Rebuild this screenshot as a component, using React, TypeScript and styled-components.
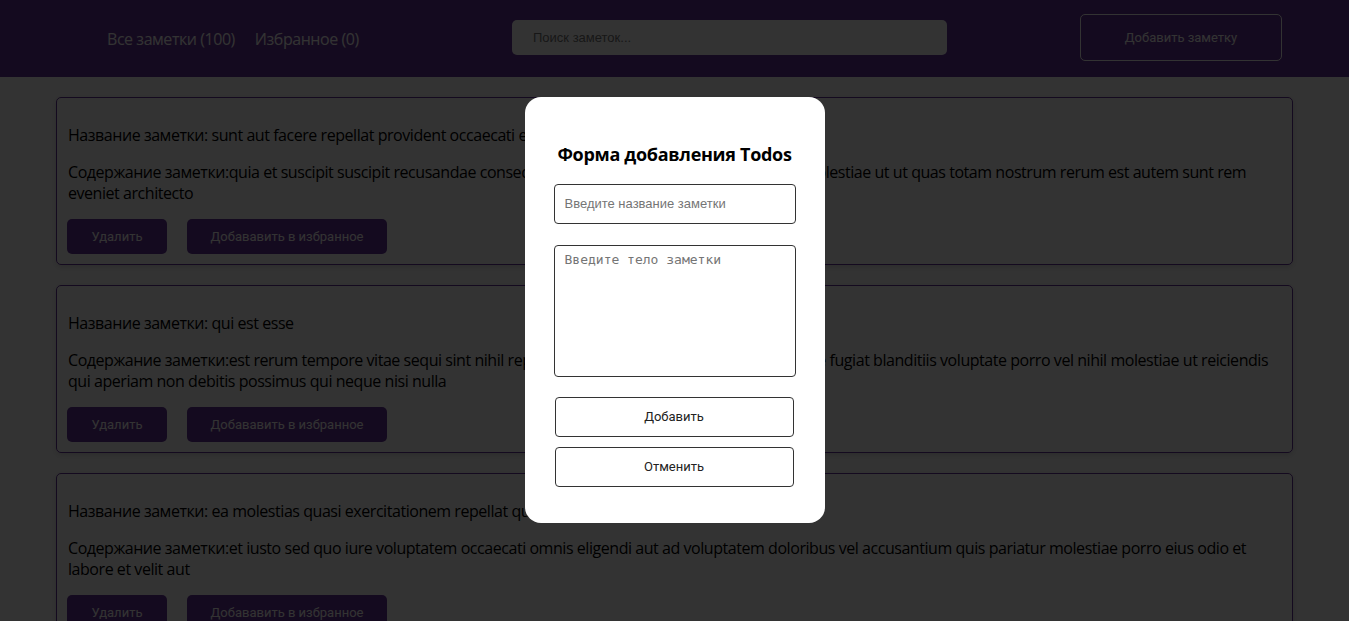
import React from "react";
import styled, { createGlobalStyle } from "styled-components";

const GlobalStyle = createGlobalStyle`
  * { box-sizing: border-box; }
  body {
    margin: 0;
    background: #ffffff;
    font-family: "Open Sans", "Noto Sans", sans-serif;
    color: #000;
  }
`;

const Header = styled.header`
  height: 77px;
  background: #663399;
  display: flex;
  align-items: center;
  padding: 0 67px 0 107px;
`;

const Nav = styled.nav`
  display: flex;
  gap: 20px;
  width: 405px;
`;

const NavLink = styled.a`
  color: #ffffff;
  font-size: 16px;
  letter-spacing: -0.45px;
  text-decoration: none;
  cursor: pointer;
`;

const Search = styled.input`
  width: 435px;
  height: 35px;
  margin-top: -2px;
  border: none;
  border-radius: 5px;
  background: #ffffff;
  padding: 0 21px;
  font-family: "Liberation Sans", Arial, sans-serif;
  font-size: 13px;
  outline: none;
  &::placeholder { color: #757575; }
`;

const HeaderButton = styled.button`
  margin-left: auto;
  margin-top: -2px;
  width: 202px;
  height: 47px;
  border: 1px solid #ffffff;
  border-radius: 5px;
  background: transparent;
  color: #ffffff;
  font-family: "Roboto", sans-serif;
  font-size: 13px;
`;

const List = styled.main`
  display: flex;
  flex-direction: column;
  gap: 20px;
  padding: 20px 56px;
`;

const Card = styled.article`
  border: 1px solid #663399;
  border-radius: 5px;
  padding: 11px 10px 10px;
  box-shadow: 0 2px 6px rgba(0, 0, 0, 0.15);
`;

const Text = styled.p`
  margin: 16px 0;
  padding-left: 1px;
  font-size: 16px;
  line-height: 21px;
  letter-spacing: -0.45px;
  &:nth-child(2) { margin-bottom: 15px; }
`;

const Actions = styled.div`
  display: flex;
  gap: 20px;
`;

const CardButton = styled.button<{ $w: number }>`
  width: ${(p) => p.$w}px;
  height: 35px;
  border: none;
  border-radius: 5px;
  background: #663399;
  color: #ffffff;
  font-family: "Roboto", sans-serif;
  font-size: 13px;
`;

const Overlay = styled.div`
  position: fixed;
  inset: 0;
  background: rgba(0, 0, 0, 0.8);
  display: flex;
  align-items: center;
  justify-content: center;
`;

const Modal = styled.form`
  width: 300px;
  background: #ffffff;
  border-radius: 16px;
  padding: 29px 29px 36px;
  margin-top: -2px;
  display: flex;
  flex-direction: column;
`;

const Title = styled.h2`
  margin: 16px 0 18px;
  font-size: 18px;
  line-height: 24px;
  font-weight: 700;
  text-align: center;
  letter-spacing: -0.3px;
`;

const Field = styled.input`
  height: 40px;
  border: 1px solid #333;
  border-radius: 4px;
  padding: 0 10px;
  font-family: "Liberation Sans", Arial, sans-serif;
  font-size: 13px;
  margin-bottom: 21px;
  &::placeholder { color: #757575; }
`;

const Area = styled.textarea`
  height: 132px;
  border: 1px solid #333;
  border-radius: 4px;
  padding: 6px 10px;
  font-family: "DejaVu Sans Mono", monospace;
  font-size: 13px;
  resize: none;
  margin-bottom: 20px;
  &::placeholder { color: #757575; }
`;

const ModalButton = styled.button`
  margin: 0 2px 10px 1px;
  height: 40px;
  border: 1px solid #333;
  border-radius: 4px;
  background: #ffffff;
  color: #222;
  font-family: "Roboto", sans-serif;
  font-size: 13px;
  &:last-child { margin-bottom: 0; }
`;

const notes = [
  {
    title: "sunt aut facere repellat provident occaecati excepturi optio reprehenderit",
    body: "quia et suscipit suscipit recusandae consequuntur expedita et cum reprehenderit molestiae ut ut quas totam nostrum rerum est autem sunt rem eveniet architecto",
  },
  {
    title: "qui est esse",
    body: "est rerum tempore vitae sequi sint nihil reprehenderit dolor beatae ea dolores neque fugiat blanditiis voluptate porro vel nihil molestiae ut reiciendis qui aperiam non debitis possimus qui neque nisi nulla",
  },
  {
    title: "ea molestias quasi exercitationem repellat qui ipsa sit aut",
    body: "et iusto sed quo iure voluptatem occaecati omnis eligendi aut ad voluptatem doloribus vel accusantium quis pariatur molestiae porro eius odio et labore et velit aut",
  },
];

export default function App() {
  return (
    <>
      <GlobalStyle />
      <Header>
        <Nav>
          <NavLink>Все заметки (100)</NavLink>
          <NavLink>Избранное (0)</NavLink>
        </Nav>
        <Search placeholder="Поиск заметок..." />
        <HeaderButton>Добавить заметку</HeaderButton>
      </Header>
      <List>
        {notes.map((n, i) => (
          <Card key={i}>
            <Text>Название заметки: {n.title}</Text>
            <Text>Содержание заметки:{n.body}</Text>
            <Actions>
              <CardButton $w={100}>Удалить</CardButton>
              <CardButton $w={200}>Добававить в избранное</CardButton>
            </Actions>
          </Card>
        ))}
      </List>
      <Overlay>
        <Modal>
          <Title>Форма добавления Todos</Title>
          <Field placeholder="Введите название заметки" />
          <Area placeholder="Введите тело заметки" />
          <ModalButton type="button">Добавить</ModalButton>
          <ModalButton type="button">Отменить</ModalButton>
        </Modal>
      </Overlay>
    </>
  );
}
